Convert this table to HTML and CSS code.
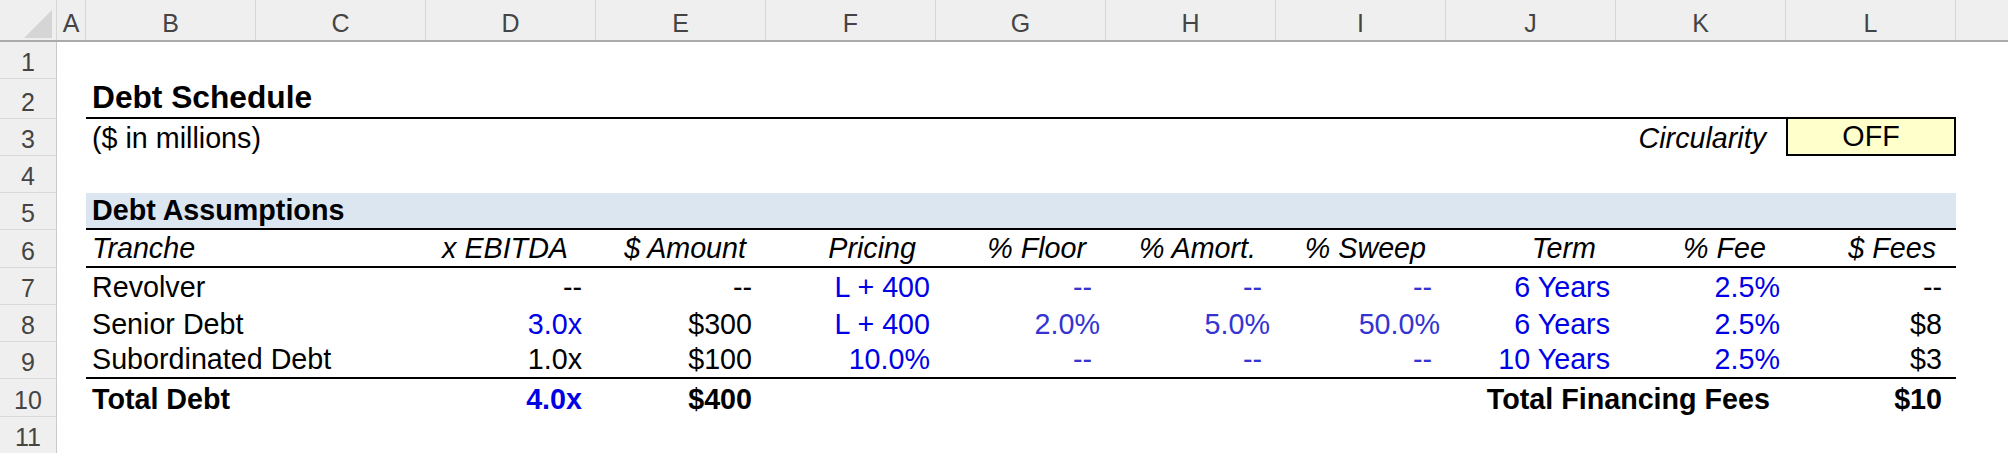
FILE: index.html
```html
<!DOCTYPE html>
<html lang="en">
<head>
<meta charset="utf-8">
<title>Debt Schedule</title>
<link rel="stylesheet" href="styles.css">
</head>
<body>
<div class="sheet">
  <div class="colhead">
    <div class="corner"><div class="tri"></div></div>
    <div class="ch cha">A</div>
    <div class="ch">B</div>
    <div class="ch">C</div>
    <div class="ch">D</div>
    <div class="ch">E</div>
    <div class="ch">F</div>
    <div class="ch">G</div>
    <div class="ch">H</div>
    <div class="ch">I</div>
    <div class="ch">J</div>
    <div class="ch">K</div>
    <div class="ch">L</div>
    <div class="ch chm"></div>
  </div>

  <div class="row h37"><div class="rh">1</div><div class="ca"></div><div class="cells"></div></div>

  <div class="row h40"><div class="rh">2</div><div class="ca"></div>
    <div class="cells line"><div class="c title">Debt Schedule</div></div>
  </div>

  <div class="row h37"><div class="rh">3</div><div class="ca"></div>
    <div class="cells">
      <div class="c">($ in millions)</div>
      <div class="c"></div><div class="c"></div><div class="c"></div><div class="c"></div><div class="c"></div>
      <div class="c"></div><div class="c"></div><div class="c"></div>
      <div class="c r h i">Circularity</div>
      <div class="c toggle">OFF</div>
    </div>
  </div>

  <div class="row h37"><div class="rh">4</div><div class="ca"></div><div class="cells"></div></div>

  <div class="row h37"><div class="rh">5</div><div class="ca"></div>
    <div class="cells band line"><div class="c b">Debt Assumptions</div></div>
  </div>

  <div class="row h38"><div class="rh">6</div><div class="ca"></div>
    <div class="cells line">
      <div class="c i">Tranche</div>
      <div class="c"></div>
      <div class="c r i hx">x EBITDA</div>
      <div class="c r i h">$ Amount</div>
      <div class="c r i h">Pricing</div>
      <div class="c r i h">% Floor</div>
      <div class="c r i h">% Amort.</div>
      <div class="c r i h">% Sweep</div>
      <div class="c r i h">Term</div>
      <div class="c r i h">% Fee</div>
      <div class="c r i h">$ Fees</div>
    </div>
  </div>

  <div class="row h37"><div class="rh">7</div><div class="ca"></div>
    <div class="cells">
      <div class="c">Revolver</div>
      <div class="c"></div>
      <div class="c r t">--</div>
      <div class="c r t">--</div>
      <div class="c r p in">L + 400</div>
      <div class="c r t in2">--</div>
      <div class="c r t in2">--</div>
      <div class="c r t in2">--</div>
      <div class="c r p in">6 Years</div>
      <div class="c r p in">2.5%</div>
      <div class="c r t">--</div>
    </div>
  </div>

  <div class="row h37"><div class="rh">8</div><div class="ca"></div>
    <div class="cells">
      <div class="c">Senior Debt</div>
      <div class="c"></div>
      <div class="c r t in">3.0x</div>
      <div class="c r t">$300</div>
      <div class="c r p in">L + 400</div>
      <div class="c r p in2">2.0%</div>
      <div class="c r p in2">5.0%</div>
      <div class="c r p in2">50.0%</div>
      <div class="c r p in">6 Years</div>
      <div class="c r p in">2.5%</div>
      <div class="c r t">$8</div>
    </div>
  </div>

  <div class="row h37"><div class="rh">9</div><div class="ca"></div>
    <div class="cells line">
      <div class="c">Subordinated Debt</div>
      <div class="c"></div>
      <div class="c r t">1.0x</div>
      <div class="c r t">$100</div>
      <div class="c r p in">10.0%</div>
      <div class="c r t in2">--</div>
      <div class="c r t in2">--</div>
      <div class="c r t in2">--</div>
      <div class="c r p in">10 Years</div>
      <div class="c r p in">2.5%</div>
      <div class="c r t">$3</div>
    </div>
  </div>

  <div class="row h38"><div class="rh">10</div><div class="ca"></div>
    <div class="cells">
      <div class="c b">Total Debt</div>
      <div class="c"></div>
      <div class="c r t b in">4.0x</div>
      <div class="c r t b">$400</div>
      <div class="c"></div><div class="c"></div><div class="c"></div><div class="c"></div><div class="c"></div>
      <div class="c r b tf">Total Financing Fees</div>
      <div class="c r t b">$10</div>
    </div>
  </div>

  <div class="row h37"><div class="rh">11</div><div class="ca"></div><div class="cells"></div></div>
</div>
</body>
</html>
```

FILE: styles.css
```css
* { box-sizing: border-box; }
html, body { margin: 0; padding: 0; background: #fff; }
body {
  width: 2008px;
  height: 453px;
  overflow: hidden;
  font-family: "Liberation Sans", Arial, sans-serif;
  color: #000;
}
.sheet { display: flex; flex-direction: column; }

/* column header */
.colhead {
  display: flex;
  height: 42px;
  background: #efefef;
  border-bottom: 2px solid #ababab;
}
.corner {
  width: 57px;
  flex: none;
  display: flex;
  justify-content: flex-end;
  align-items: flex-end;
  padding: 0 4px 2px 0;
  border-right: 1px solid #d6d6d6;
}
.tri {
  width: 28px;
  height: 28px;
  background: #d5d5d5;
  clip-path: polygon(100% 0, 100% 100%, 0 100%);
}
.ch {
  width: 170px;
  flex: none;
  display: flex;
  justify-content: center;
  align-items: flex-end;
  padding-bottom: 4px;
  font-size: 25px;
  line-height: 1;
  color: #444;
  border-right: 1px solid #d6d6d6;
}
.cha { width: 29px; }
.chm { flex: 1; border-right: none; }

/* rows */
.row { display: flex; }
.h37 { height: 37px; }
.h38 { height: 38px; }
.h40 { height: 40px; }
.rh {
  width: 57px;
  flex: none;
  background: #efefef;
  border-right: 1px solid #c9c9c9;
  border-bottom: 1px solid #d9d9d9;
  display: flex;
  justify-content: center;
  align-items: flex-end;
  padding-bottom: 3px;
  font-size: 25px;
  line-height: 1;
  color: #444;
}
.ca { width: 29px; flex: none; }
.cells {
  width: 1870px;
  flex: none;
  display: grid;
  grid-template-columns: repeat(11, 170px);
}
.line { border-bottom: 2px solid #000; }
.band { background: #dce6f1; }

.c {
  display: flex;
  align-items: flex-end;
  padding: 0 0 3px 6px;
  font-size: 28.7px;
  line-height: 1;
  white-space: nowrap;
  min-width: 0;
}
.title { font-size: 31.7px; font-weight: bold; }
.b { font-weight: bold; }
.i { font-style: italic; }
.r { justify-content: flex-end; padding-left: 0; padding-right: 6px; }
.r.p { padding-right: 6px; }
.r.t { padding-right: 14px; }
.r.h { padding-right: 20px; }
.r.hx { padding-right: 28px; }
.r.tf { padding-right: 16px; }
.in { color: #0000e6; }
.in2 { color: #3434d2; }

.toggle {
  justify-content: center;
  padding-left: 0;
  background: #ffffcc;
  border: 2px solid #000;
  border-top: none;
}
```
